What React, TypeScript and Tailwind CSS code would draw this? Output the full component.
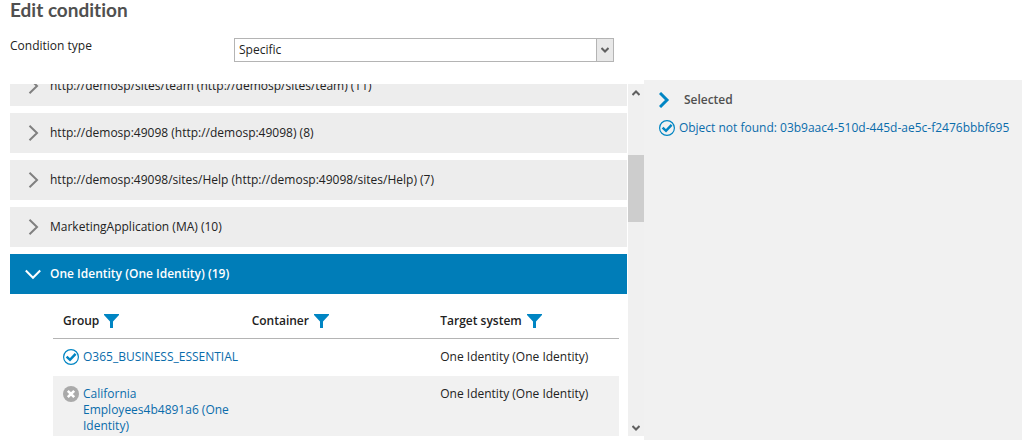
import React, { useLayoutEffect, useRef, useState } from 'react';

interface System {
  name: string;
  count: number;
}

interface GroupRow {
  name: string;
  container: string;
  target: string;
  selected: boolean;
}

const SYSTEMS: System[] = [
  { name: 'http://demosp/sites/team (http://demosp/sites/team)', count: 11 },
  { name: 'http://demosp:49098 (http://demosp:49098)', count: 8 },
  { name: 'http://demosp:49098/sites/Help (http://demosp:49098/sites/Help)', count: 7 },
  { name: 'MarketingApplication (MA)', count: 10 },
  { name: 'One Identity (One Identity)', count: 19 },
];

const GROUPS: GroupRow[] = [
  { name: 'O365_BUSINESS_ESSENTIAL', container: '', target: 'One Identity (One Identity)', selected: true },
  { name: 'California Employees4b4891a6 (One Identity)', container: '', target: 'One Identity (One Identity)', selected: false },
];

const COLUMNS = ['Group', 'Container', 'Target system'];

const CheckIcon: React.FC = () => (
  <svg className="h-4 w-4 shrink-0" viewBox="0 0 16 16" fill="none" stroke="#0085c3">
    <circle cx="8" cy="8" r="7.4" strokeWidth="1.2" />
    <path d="M3.6 7.6 7 10.8 12.6 4.8" strokeWidth="2.5" />
  </svg>
);

const CrossIcon: React.FC = () => (
  <svg className="h-4 w-4 shrink-0" viewBox="0 0 16 16">
    <circle cx="8" cy="8" r="8" fill="#aaa" />
    <path d="M4.8 4.8l6.4 6.4M11.2 4.8l-6.4 6.4" stroke="#fff" strokeWidth="2.6" />
  </svg>
);

const FilterIcon: React.FC = () => (
  <svg className="h-[14px] w-[15px]" viewBox="0 0 15 14" fill="#0085c3">
    <path d="M0 0h15v1L9 7.5V14H6V7.5L0 1z" />
  </svg>
);

const Chevron: React.FC<{ open: boolean }> = ({ open }) => (
  <svg className="h-4 w-4 shrink-0" viewBox="0 0 16 16" fill="none" strokeWidth="2">
    {open ? (
      <path d="M.8 4.5 8 11.8 15.2 4.5" stroke="#fff" />
    ) : (
      <path d="M4.5.8 12 8l-7.5 7.2" stroke="#808080" />
    )}
  </svg>
);

const SmallArrow: React.FC<{ up?: boolean }> = ({ up = false }) => (
  <svg className="h-[6px] w-2" viewBox="0 0 8 6" fill="none" stroke="#606060" strokeWidth="2">
    <path d={up ? 'M.5 5 4 1.5 7.5 5' : 'M.5 1 4 4.5 7.5 1'} />
  </svg>
);

const GroupTable: React.FC = () => (
  <div className="pr-2 pl-[43px]">
    <table className="w-full table-fixed border-collapse text-left">
      <thead>
        <tr className="h-11 border-b border-[#b4b4b4]">
          {COLUMNS.map((column) => (
            <th key={column} className="px-[10px] pt-[10px] font-semibold">
              <div className="flex items-center gap-[5px]">
                {column}
                <button type="button" aria-label={`Filter ${column}`}>
                  <FilterIcon />
                </button>
              </div>
            </th>
          ))}
        </tr>
      </thead>
      <tbody>
        {GROUPS.map((group) => (
          <tr key={group.name} className="align-top even:bg-[#f1f1f1]">
            <td className="px-[10px] pt-[10px] pb-[11px]">
              <a href="#" className="flex gap-1 text-[#0a6cab]">
                {group.selected ? <CheckIcon /> : <CrossIcon />}
                <span>{group.name}</span>
              </a>
            </td>
            <td className="px-[10px] pt-[10px] pb-[11px]">{group.container}</td>
            <td className="px-[10px] pt-[10px] pb-[11px]">{group.target}</td>
          </tr>
        ))}
      </tbody>
    </table>
  </div>
);

const App: React.FC = () => {
  const [openSystem, setOpenSystem] = useState('One Identity (One Identity)');
  const listRef = useRef<HTMLDivElement>(null);

  useLayoutEffect(() => {
    if (listRef.current) listRef.current.scrollTop = 18;
  }, []);

  const scrollBy = (top: number): void => {
    listRef.current?.scrollBy({ top });
  };

  return (
    <main className="bg-white font-['Open_Sans','Noto_Sans',sans-serif] text-[12px] leading-4 text-[#222]">
      <h1 className="px-[10px] font-['Lato','Open_Sans',sans-serif] text-[19px] leading-5 font-bold text-[#505050] [font-variant-ligatures:none]">
        Edit condition
      </h1>

      <div className="flex items-start px-[10px] pt-[18px] pb-[18px]">
        <label htmlFor="condition-type" className="w-56 shrink-0">
          Condition type
        </label>
        <div className="relative w-[380px]">
          <select
            id="condition-type"
            className="h-6 w-full appearance-none border border-[#b4b4b4] bg-white px-1"
          >
            <option>Specific</option>
          </select>
          <span className="pointer-events-none absolute inset-y-0 right-0 flex w-[18px] items-center justify-center border border-[#b4b4b4] bg-[#e8e8e8]">
            <SmallArrow />
          </span>
        </div>
      </div>

      <div className="flex">
        <div className="flex min-w-0 flex-1 py-1 pl-[10px]">
          <div
            ref={listRef}
            className="flex h-[352px] min-w-0 flex-1 flex-col gap-[7px] overflow-y-auto [scrollbar-width:none]"
          >
            {SYSTEMS.map(({ name, count }) => {
              const open = name === openSystem;
              return (
                <section key={name}>
                  <button
                    type="button"
                    aria-expanded={open}
                    onClick={() => setOpenSystem(open ? '' : name)}
                    className={`flex h-10 w-full items-center gap-[9px] px-[15px] text-left ${open ? 'bg-[#007db8] font-semibold text-white' : 'bg-[#ededed]'}`}
                  >
                    <Chevron open={open} />
                    {name} ({count})
                  </button>
                  {open && <GroupTable />}
                </section>
              );
            })}
          </div>
          <div className="ml-px flex w-4 flex-col items-center bg-[#f0f0f0]">
            <button
              type="button"
              aria-label="Scroll up"
              onClick={() => scrollBy(-47)}
              className="flex h-[17px] w-full items-center justify-center"
            >
              <SmallArrow up />
            </button>
            <div className="flex w-full flex-1 flex-col pt-[54px]">
              <div className="h-[67px] bg-[#cdcdcd]" />
            </div>
            <button
              type="button"
              aria-label="Scroll down"
              onClick={() => scrollBy(47)}
              className="flex h-[17px] w-full items-center justify-center"
            >
              <SmallArrow />
            </button>
          </div>
        </div>

        <aside className="w-[37%] shrink-0 bg-[#f1f1f1] px-[15px] pt-3">
          <h2 className="flex items-center gap-[9px] font-semibold text-[#505050]">
            <svg className="h-4 w-4" viewBox="0 0 16 16" fill="none" stroke="#0085c3" strokeWidth="3">
              <path d="M1 1l7 7-7 7" />
            </svg>
            Selected
          </h2>
          <a href="#" className="mt-3 flex gap-1 whitespace-nowrap text-[#0a6cab]">
            <CheckIcon />
            Object not found: 03b9aac4-510d-445d-ae5c-f2476bbbf695
          </a>
        </aside>
      </div>
    </main>
  );
};

export default App;
